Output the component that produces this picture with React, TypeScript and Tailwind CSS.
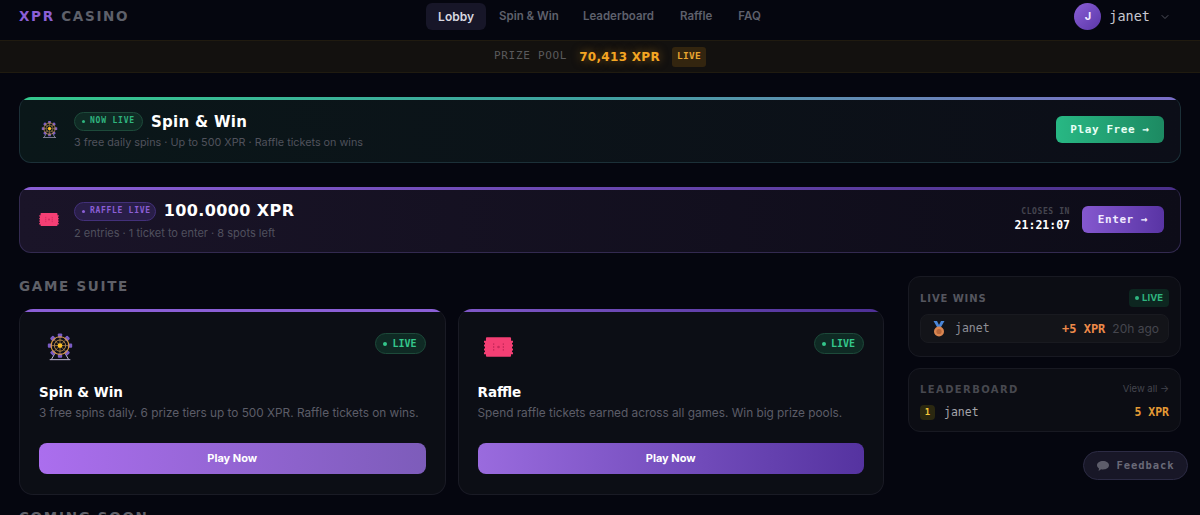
import type { ReactNode } from 'react';
import { ChevronDown } from 'lucide-react';

const display = 'font-["DejaVu_Sans",sans-serif]';
const mono = 'font-["DejaVu_Sans_Mono","Liberation_Mono",monospace]';

function FerrisWheel({ size }: { size: number }) {
  const spokes = [0, 45, 90, 135, 180, 225, 270, 315];
  return (
    <svg width={size} height={size} viewBox="0 0 32 32" fill="none">
      <path d="M11 22 7 29M21 22l4 7M5 29.5h22" stroke="#c9bfe0" strokeWidth="1" />
      {spokes.map((a) => (
        <rect key={a} x="13.7" y="1.5" width="4.6" height="4.6" rx="1" fill="#7a5cc4" transform={`rotate(${a} 16 14.5)`} />
      ))}
      <circle cx="16" cy="14.5" r="9.5" stroke="#d99a3c" strokeWidth="1.2" />
      <circle cx="16" cy="14.5" r="6" stroke="#b98a4a" strokeWidth="1" />
      {spokes.map((a) => (
        <path key={a} d="M16 14.5V5" stroke="#c99650" strokeWidth="0.7" transform={`rotate(${a} 16 14.5)`} />
      ))}
      <circle cx="16" cy="14.5" r="2.6" fill="#fbbf24" />
    </svg>
  );
}

function Ticket({ w, h }: { w: number; h: number }) {
  return (
    <svg width={w} height={h} viewBox="0 0 30 20" fill="none">
      <path
        d="M3 0h24a1 1 0 0 1 1 1v2.500h2v2h-1v2h1v2h-1v2h1v2h-1v2h1v2h-2V19a1 1 0 0 1-1 1H3a1 1 0 0 1-1-1v-1.500H0v-2h1v-2H0v-2h1v-2H0v-2h1v-2H0v-2h2V1a1 1 0 0 1 1-1Z"
        fill="#f43f74"
      />
      <path d="M10 6v8M20 6v8" stroke="#c92a5c" strokeWidth="1.2" strokeDasharray="2 1" />
      <circle cx="15" cy="10" r="1.4" fill="#c92a5c" />
    </svg>
  );
}

function Medal() {
  return (
    <svg width="12" height="16" viewBox="0 0 12 16" fill="none">
      <path d="M0.500 0h3.500l2 4 2-4h3.500L8 6H4L0.500 0Z" fill="#4a86d8" />
      <circle cx="6" cy="10.500" r="5" fill="#d98550" />
      <circle cx="6" cy="10.500" r="2.600" fill="#b5653a" />
    </svg>
  );
}

function LivePill() {
  return (
    <span className={`flex h-[21px] items-center gap-[5px] rounded-full border border-[#1d4a3a] bg-[#0f2a24] pr-[8px] pl-[7px] ${mono} text-[10px] font-bold text-[#34c78c]`}>
      <span className="h-[4px] w-[4px] rounded-full bg-[#34c78c]" />
      LIVE
    </span>
  );
}

function GameCard({ icon, title, desc, bar, button }: { icon: ReactNode; title: string; desc: string; bar: string; button: string }) {
  return (
    <div className="flex h-[186px] flex-col overflow-hidden rounded-[14px] border border-t-0 border-[#1a1b25] bg-[#0c0e15]">
      <div className={`h-[3px] shrink-0 ${bar}`} />
      <div className="flex flex-1 flex-col px-[19px] pt-[18px]">
        <div className="flex h-[41px] items-start justify-between">
          <div className="flex h-[34px] w-[42px] items-center justify-center">{icon}</div>
          <div className="mt-[3px]"><LivePill /></div>
        </div>
        <h3 className={`mt-[12px] ${display} text-[13.5px] leading-[18px] font-bold text-white`}>{title}</h3>
        <p className="mt-[4px] font-['Inter',sans-serif] text-[11.8px] leading-[16px] whitespace-nowrap text-[#5c5d68]">{desc}</p>
        <button className={`mt-[22px] h-[31px] rounded-[8px] font-['Inter',sans-serif] text-[11px] font-bold text-white ${button}`}>Play Now</button>
      </div>
    </div>
  );
}

export default function App() {
  return (
    <div className="relative h-[515px] overflow-hidden bg-[#05060f] font-['Inter',sans-serif]">
      <header className="flex h-[40px] items-center justify-between pr-[29px] pb-[7px] pl-[19px]">
        <div className={`w-[250px] ${display} text-[13.5px] font-bold tracking-[1.7px]`}>
          <span className="text-[#8b5fd6]">XPR</span> <span className="text-[#5e606a]">CASINO</span>
        </div>
        <nav className="flex items-center text-[11.5px] font-semibold text-[#5e606c]">
          <span className="flex h-[27px] items-center rounded-[6px] bg-[#171628] px-[12px] text-[12px] text-[#d8d8e0]">Lobby</span>
          <span className="pr-[11px] pl-[13px]">Spin &amp; Win</span>
          <span className="px-[13px]">Leaderboard</span>
          <span className="px-[13px]">Raffle</span>
          <span className="px-[13px]">FAQ</span>
        </nav>
        <div className="flex w-[240px] items-center justify-end gap-[8px]">
          <span className="flex h-[27px] w-[27px] items-center justify-center rounded-full bg-gradient-to-br from-[#8b5fd6] to-[#5b36a8] text-[11px] font-bold text-[#f0eaff]">J</span>
          <span className={`${mono} text-[13.5px] text-[#c8c8d0]`}>janet</span>
          <ChevronDown size={12} className="ml-[1px] text-[#50515c]" />
        </div>
      </header>

      <div className="flex h-[33px] items-center justify-center gap-[12px] border-y border-[#201b10] bg-[#13110f]">
        <span className={`${mono} text-[11px] tracking-[0.7px] text-[#5a5a5c]`}>PRIZE POOL</span>
        <span className={`${display} text-[12px] font-bold tracking-[0.3px] text-[#f5a623] [text-shadow:0_0_10px_rgba(245,166,35,0.5)]`}>70,413 XPR</span>
        <span className={`flex h-[20px] items-center rounded-[3px] bg-[#33250f] px-[5px] ${mono} text-[9.5px] font-bold tracking-[0.3px] text-[#e8a530]`}>LIVE</span>
      </div>

      <main className="px-[19px] pt-[24px]">
        <section className="flex h-[66px] flex-col overflow-hidden rounded-[12px] border border-t-0 border-[#1c3038] bg-gradient-to-r from-[#0a1719] to-[#0c0e18]">
          <div className="h-[3px] shrink-0 bg-gradient-to-r from-[#34c78c] via-[#3fa0a0] to-[#7a6cc8]" />
          <div className="flex flex-1 items-center justify-between pr-[16px] pb-[3px] pl-[20px]">
            <div className="flex items-center gap-[15px]">
              <FerrisWheel size={19} />
              <div>
                <div className="flex items-center gap-[8px]">
                  <span className={`flex h-[19px] items-center gap-[5px] rounded-full border border-[#1d4a3a] bg-[#0f2a24] px-[7px] ${mono} text-[8px] font-bold tracking-[0.8px] text-[#2fb57f]`}>
                    <span className="h-[3px] w-[3px] rounded-full bg-[#2fb57f]" />
                    NOW LIVE
                  </span>
                  <span className={`${display} pt-[2px] text-[15px] leading-[22px] font-bold tracking-[0.3px] text-white`}>Spin &amp; Win</span>
                </div>
                <p className="mt-[3px] text-[10.8px] leading-[14px] text-[#50525c]">3 free daily spins · Up to 500 XPR · Raffle tickets on wins</p>
              </div>
            </div>
            <button className={`h-[27px] w-[108px] rounded-[6px] bg-gradient-to-r from-[#28b884] to-[#1d8a62] pt-px ${mono} text-[11px] font-bold tracking-[0.6px] text-[#e8fff5]`}>Play Free →</button>
          </div>
        </section>

        <section className="mt-[24px] flex h-[66px] flex-col overflow-hidden rounded-[12px] border border-t-0 border-[#332a50] bg-gradient-to-r from-[#1a1428] to-[#0d0c18]">
          <div className="h-[3px] shrink-0 bg-gradient-to-r from-[#8b5fd6] to-[#4a2f8a]" />
          <div className="flex flex-1 items-center justify-between pr-[16px] pb-[3px] pl-[19px]">
            <div className="flex items-center gap-[15px]">
              <Ticket w={20} h={13} />
              <div>
                <div className="flex items-center gap-[8px]">
                  <span className={`flex h-[19px] items-center gap-[5px] rounded-full border border-[#43307a] bg-[#291e48] pr-[4px] pl-[7px] ${mono} text-[8px] font-bold tracking-[0.7px] text-[#8b5fd6]`}>
                    <span className="h-[3px] w-[3px] rounded-full bg-[#8b5fd6]" />
                    RAFFLE LIVE
                  </span>
                  <span className={`${display} text-[16px] font-bold tracking-[0.4px] text-white`}>100.0000 XPR</span>
                </div>
                <p className="mt-[3px] text-[11px] leading-[14px] text-[#50505e]">2 entries · 1 ticket to enter · 8 spots left</p>
              </div>
            </div>
            <div className="flex items-center gap-[12px]">
              <div className="text-right">
                <div className={`${mono} text-[8px] font-bold tracking-[0.6px] text-[#45454f]`}>CLOSES IN</div>
                <div className={`${mono} text-[11.5px] leading-[15px] font-bold text-white`}>21:21:07</div>
              </div>
              <button className={`h-[27px] w-[82px] rounded-[6px] bg-gradient-to-r from-[#8558cf] to-[#5934a4] pt-px ${mono} text-[11px] font-bold tracking-[0.6px] text-[#f0eaff]`}>Enter →</button>
            </div>
          </div>
        </section>

        <div className="mt-[23px] flex gap-[24px]">
          <div className="w-[865px] shrink-0">
            <h2 className={`mt-[2px] ${display} text-[13.5px] leading-[16px] font-bold tracking-[1.7px] text-[#5f6068]`}>GAME SUITE</h2>
            <div className="mt-[15px] grid grid-cols-2 gap-[12px]">
              <GameCard
                icon={<FerrisWheel size={30} />}
                title="Spin & Win"
                desc="3 free spins daily. 6 prize tiers up to 500 XPR. Raffle tickets on wins."
                bar="bg-[#8b5fd6]"
                button="bg-gradient-to-r from-[#ab6eee] to-[#7d5cba]"
              />
              <GameCard
                icon={<Ticket w={29} h={20} />}
                title="Raffle"
                desc="Spend raffle tickets earned across all games. Win big prize pools."
                bar="bg-gradient-to-r from-[#8058c8] to-[#4d2f95]"
                button="bg-gradient-to-r from-[#9a6bde] to-[#5533a0]"
              />
            </div>
            <h2 className={`mt-[14px] ${display} text-[13.5px] leading-[16px] font-bold tracking-[1.7px] text-[#5f6068]`}>COMING SOON</h2>
          </div>

          <aside className="flex w-[273px] shrink-0 flex-col gap-[11px]">
            <div className="h-[81px] rounded-[12px] border border-[#181922] bg-[#0c0d14] px-[11px] pt-[12px]">
              <div className="flex items-center justify-between">
                <span className={`${display} text-[10px] font-bold tracking-[0.9px] text-[#55565f]`}>LIVE WINS</span>
                <span className="flex h-[18px] items-center gap-[3px] rounded-[4px] bg-[#0d2620] px-[6px] text-[9.5px] font-bold text-[#2fb57f]">
                  <span className="h-[4px] w-[4px] rounded-full bg-[#2fb57f]" />
                  LIVE
                </span>
              </div>
              <div className="mt-[7px] flex h-[29px] items-center justify-between rounded-[8px] border border-[#191a20] bg-[#131419] pr-[9px] pl-[12px]">
                <div className="flex items-center gap-[10px]">
                  <Medal />
                  <span className={`${mono} text-[11.5px] text-[#8e8f96]`}>janet</span>
                </div>
                <div className="flex items-center gap-[7px]">
                  <span className={`${mono} text-[12px] font-bold text-[#ee8a4a]`}>+5 XPR</span>
                  <span className="text-[12px] text-[#45464e]">20h ago</span>
                </div>
              </div>
            </div>
            <div className="h-[64px] rounded-[12px] border border-[#181922] bg-[#0c0d14] px-[11px] pt-[13px]">
              <div className="flex items-center justify-between">
                <span className={`${display} text-[10px] font-bold tracking-[1.4px] text-[#47484f]`}>LEADERBOARD</span>
                <span className="text-[9.5px] text-[#44454e]">View all →</span>
              </div>
              <div className="mt-[7px] flex items-center justify-between">
                <div className="flex items-center gap-[9px]">
                  <span className={`flex h-[15px] w-[15px] items-center justify-center rounded-[4px] bg-[#2b2810] ${mono} text-[9px] font-bold text-[#f5c93a]`}>1</span>
                  <span className={`${mono} text-[11.5px] text-[#a4a4aa]`}>janet</span>
                </div>
                <span className={`${mono} text-[11.5px] font-bold text-[#e39a35]`}>5 XPR</span>
              </div>
            </div>
          </aside>
        </div>
      </main>

      <button className={`absolute top-[451px] left-[1083px] flex h-[29px] w-[105px] items-center justify-center gap-[8px] rounded-full border border-[#2c2b44] bg-[#181727] ${mono} text-[10.5px] font-bold tracking-[0.9px] text-[#6a6a78]`}>
        <svg width="12" height="10" viewBox="0 0 12 10" fill="#5d5d6a">
          <path d="M6 0c3.300 0 6 1.800 6 4.200S9.300 8.400 6 8.400c-.7 0-1.300-.1-1.900-.2L1.600 10l.4-2.600C.8 6.600 0 5.500 0 4.200 0 1.800 2.700 0 6 0Z" />
        </svg>
        Feedback
      </button>
    </div>
  );
}
